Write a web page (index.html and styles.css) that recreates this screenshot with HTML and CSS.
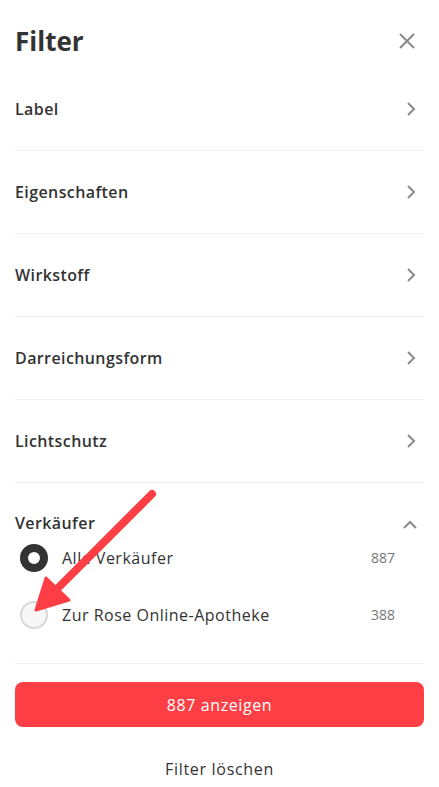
FILE: index.html
```html
<!DOCTYPE html>
<html lang="de">

<head>
  <meta charset="UTF-8">
  <meta name="viewport" content="width=device-width, initial-scale=1.0">
  <title>Filter</title>
  <link rel="stylesheet" href="styles.css">
</head>

<body>
  <div class="filter">
    <div class="filter-head">
      <h1 class="filter-title">Filter</h1>
      <button class="filter-close" aria-label="Schließen">
        <svg width="16" height="16" viewBox="0 0 16 16">
          <path d="M1 1L15 15M15 1L1 15" stroke="#8a8a8a" stroke-width="2" fill="none" />
        </svg>
      </button>
    </div>

    <div class="filter-row">
      <span>Label</span>
      <svg class="chevron" width="10" height="16" viewBox="0 0 10 16"><path d="M2 2l6 6-6 6" /></svg>
    </div>
    <div class="filter-row">
      <span>Eigenschaften</span>
      <svg class="chevron" width="10" height="16" viewBox="0 0 10 16"><path d="M2 2l6 6-6 6" /></svg>
    </div>
    <div class="filter-row">
      <span>Wirkstoff</span>
      <svg class="chevron" width="10" height="16" viewBox="0 0 10 16"><path d="M2 2l6 6-6 6" /></svg>
    </div>
    <div class="filter-row">
      <span>Darreichungsform</span>
      <svg class="chevron" width="10" height="16" viewBox="0 0 10 16"><path d="M2 2l6 6-6 6" /></svg>
    </div>
    <div class="filter-row">
      <span>Lichtschutz</span>
      <svg class="chevron" width="10" height="16" viewBox="0 0 10 16"><path d="M2 2l6 6-6 6" /></svg>
    </div>

    <div class="filter-group">
      <div class="group-title">
        <span>Verkäufer</span>
        <svg class="chevron" width="16" height="10" viewBox="0 0 16 10"><path d="M2 8l6-6 6 6" /></svg>
      </div>
      <ul class="options">
        <li class="option">
          <span class="radio is-checked"></span>
          <span class="option-name">Alle Verkäufer</span>
          <span class="option-count">887</span>
        </li>
        <li class="option">
          <span class="radio"></span>
          <span class="option-name">Zur Rose Online-Apotheke</span>
          <span class="option-count">388</span>
        </li>
      </ul>
    </div>

    <div class="filter-foot">
      <button class="btn-show">887 anzeigen</button>
      <button class="btn-reset">Filter löschen</button>
    </div>

    <!-- annotation arrow -->
    <svg class="pointer" width="439" height="787" viewBox="0 0 439 787">
      <line x1="152" y1="494" x2="52" y2="594" stroke="#fd3f45" stroke-width="8" stroke-linecap="round" />
      <polygon points="36,610 46,578 69,600" fill="#fd3f45" stroke="#fd3f45" stroke-width="3" stroke-linejoin="round" />
    </svg>
  </div>
</body>

</html>
```

FILE: styles.css
```css
body {
  margin: 0;
  font-family: "Open Sans", "Noto Sans", Arial, sans-serif;
  color: #333;
  background-color: #fff;
}

.filter {
  position: relative;
  padding: 0 15px;
}

.filter-head {
  display: flex;
  align-items: center;
  justify-content: space-between;
  height: 54px;
  padding-top: 14px;
}

.filter-title {
  margin: 0;
  font-size: 26px;
  font-weight: 700;
  color: #333;
}

.filter-close {
  border: 0;
  padding: 0;
  margin-right: 9px;
  background: none;
  display: flex;
}

.filter-row {
  display: flex;
  align-items: center;
  justify-content: space-between;
  height: 82px;
  border-bottom: 1px solid #efefef;
  font-size: 16px;
  font-weight: 600;
  letter-spacing: 0.4px;
}

.chevron {
  margin-right: 8px;
}

.chevron path {
  fill: none;
  stroke: #8a8a8a;
  stroke-width: 2;
}

.filter-group {
  padding: 28px 0 20px;
  border-bottom: 1px solid #efefef;
}

.group-title {
  display: flex;
  align-items: center;
  justify-content: space-between;
  line-height: 24px;
  font-size: 16px;
  font-weight: 600;
  letter-spacing: 0.4px;
}

.group-title .chevron {
  margin-right: 6px;
  margin-top: 4px;
}

.options {
  list-style: none;
  margin: -6px 0 0;
  padding: 0;
}

.option {
  display: flex;
  align-items: center;
  height: 57px;
  font-size: 16px;
  letter-spacing: 0.5px;
}

.radio {
  box-sizing: border-box;
  width: 28px;
  height: 28px;
  margin-left: 5px;
  border-radius: 50%;
  border: 2px solid #d8d8d8;
  background-color: #f7f7f7;
}

.radio.is-checked {
  border: 8px solid #333;
  background-color: #fff;
}

.option-name {
  flex: 1;
  margin-left: 14px;
  color: #333;
}

.option-count {
  margin-right: 29px;
  font-size: 14px;
  letter-spacing: 0;
  color: #777;
}

.filter-foot {
  display: flex;
  flex-direction: column;
  align-items: center;
  padding-top: 18px;
}

.btn-show {
  width: 100%;
  height: 45px;
  border: 0;
  border-radius: 8px;
  background-color: #fd3f45;
  color: #fff;
  font-family: inherit;
  font-size: 16px;
  letter-spacing: 0.6px;
}

.btn-reset {
  margin-top: 30px;
  border: 0;
  padding: 0;
  background: none;
  font-family: inherit;
  font-size: 16px;
  letter-spacing: 0.7px;
  line-height: 24px;
  color: #333;
}

.pointer {
  position: absolute;
  top: 0;
  left: 0;
  pointer-events: none;
}
```
